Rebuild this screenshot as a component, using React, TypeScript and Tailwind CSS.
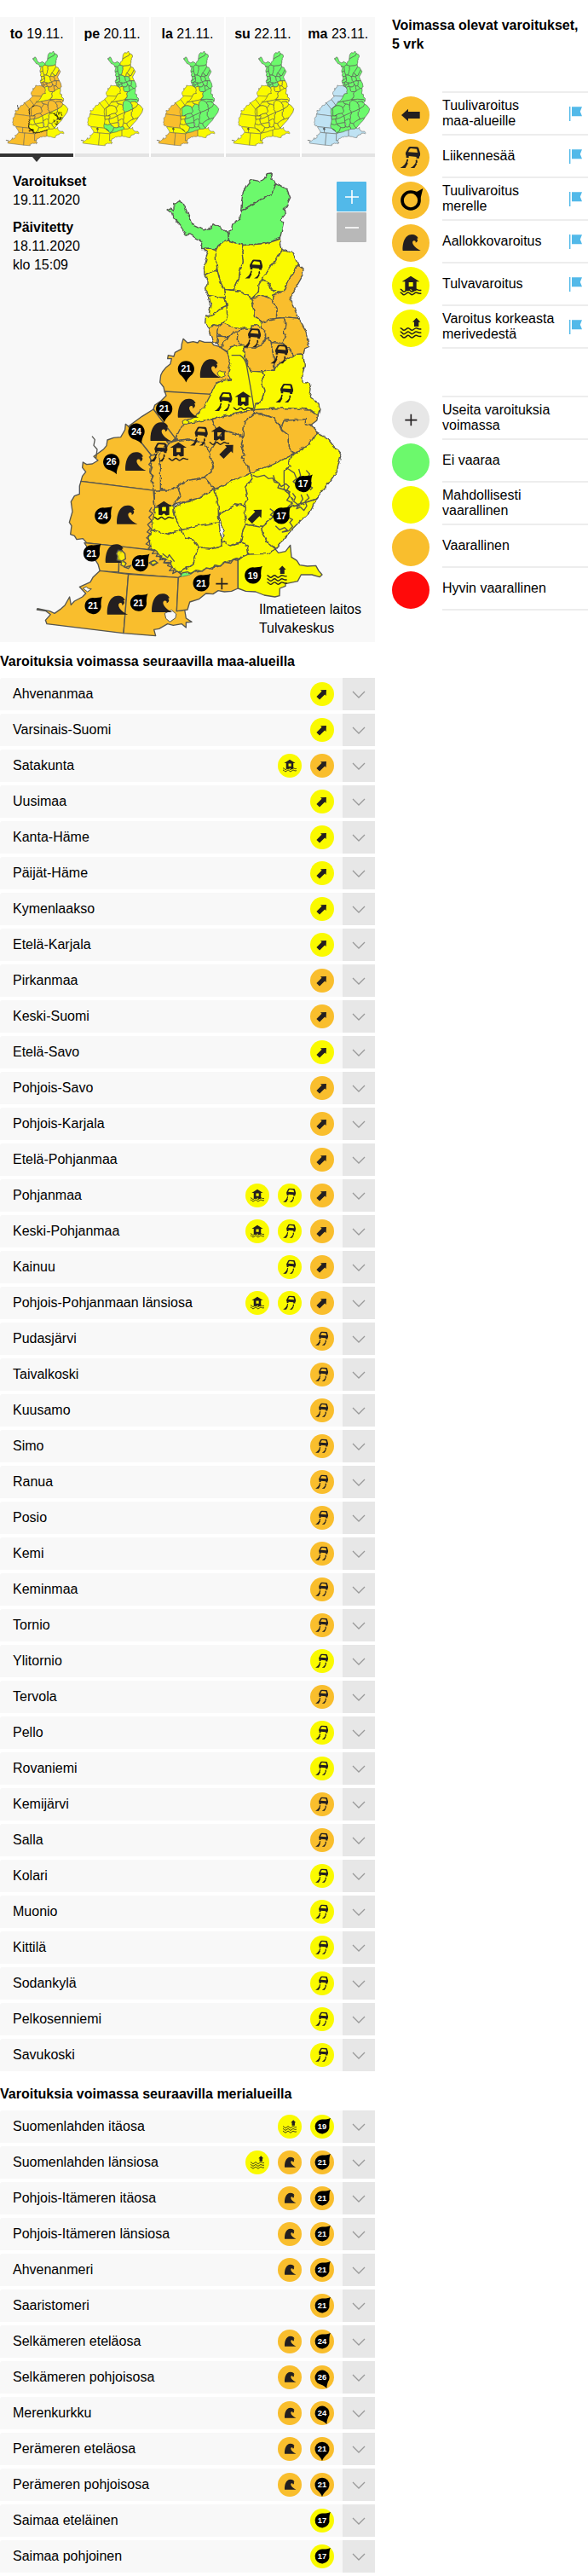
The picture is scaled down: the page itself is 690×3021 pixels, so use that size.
import type { ReactNode } from "react";

const FILL: Record<string, string> = { G: "#6cf96c", Y: "#fafa00", O: "#f9be2d", B: "#bfe2f3" };
const INK = "#231f20";

type Region = { id: string; points: string; days: string };

/* Sea and land areas; `days` holds one colour letter for each of the five days. */
const SEAS: Region[] = [
  { id: "peramerenPohjois", days: "OYYYB", points: "580,1380 576,1362 563,1345 566,1320 572,1308 585,1292 600,1280 604,1262 590,1262 592,1250 612,1254 616,1240 638,1228 640,1210 645,1192 660,1206 680,1202 696,1206 702,1198 720,1204 745,1204 752,1214 775,1220 800,1240 830,1270 830,1340 790,1342 765,1345 742,1388" },
  { id: "peramerenEtela", days: "OYYYB", points: "580,1377 742,1387 800,1400 720,1500 620,1560 618,1545 540,1440 545,1425 565,1412 585,1392" },
  { id: "merenkurkku", days: "OYYYB", points: "540,1440 618,1543 640,1600 545,1640 535,1605 452,1500 500,1465" },
  { id: "selkamerenPohjois", days: "OYOYB", points: "452,1500 535,1605 580,1640 570,1729 285,1693 290,1675 302,1660 290,1645 292,1626 305,1634 325,1632 345,1620 330,1606 365,1580 375,1568 378,1548 400,1540 425,1538 440,1512 442,1492" },
  { id: "selkamerenEtela", days: "OYOYB", points: "285,1693 570,1729 570,1940 305,1910 292,1895 270,1898 262,1885 248,1880 252,1850 244,1838 255,1800 250,1765 262,1745 280,1738 280,1710" },
  { id: "ahvenanmeri", days: "OYYYB", points: "297,1910 420,1922 418,2013 352,2010 345,1985 322,1950" },
  { id: "saaristomeri", days: "OYYYB", points: "420,1922 560,1938 680,2000 690,2030 628,2033 418,2015" },
  { id: "itameriLansi", days: "OYOYB", points: "352,2008 452,2020 435,2228 165,2195 160,2182 178,2162 162,2150 130,2145 132,2141 175,2150 192,2158 212,2144 228,2130 245,2100 250,2128 262,2115 290,2100 302,2088 280,2065 318,2048 328,2030" },
  { id: "itameriIta", days: "OYOYB", points: "452,2020 628,2032 622,2150 650,2145 655,2175 675,2188 655,2190 655,2208 640,2195 610,2200 590,2195 560,2212 542,2215 548,2237 435,2228" },
  { id: "suomenlahtiLansi", days: "OYOYB", points: "628,2032 690,1990 838,1940 838,2070 815,2080 790,2082 768,2078 750,2090 725,2088 700,2108 668,2118 660,2145 622,2150" },
  { id: "suomenlahtiIta", days: "YYYYB", points: "838,1940 960,1920 980,1945 1005,1940 1022,1918 1026,1960 1045,1972 1055,1988 1082,1992 1112,1990 1122,2008 1134,2022 1125,2030 1098,2022 1060,2022 1048,2045 1005,2054 1005,2062 985,2070 984,2096 968,2100 930,2094 900,2082 865,2080 838,2070" },
];

const LAND: Region[] = [
  { id: "utsjoki", days: "GYGGG", points: "848,743 852,700 857,670 870,648 885,632 915,638 935,622 940,614 954,612 958,630 972,645 965,665 955,685 925,698" },
  { id: "inari", days: "GYGGG", points: "848,743 925,698 955,685 965,665 972,648 1010,665 1022,695 1008,725 1000,735 1003,755 985,778 998,782 990,820 985,840 935,856 858,862 815,852 805,845 803,817 815,805 818,790 828,780 845,772" },
  { id: "enontekio", days: "GGGGG", points: "588,738 598,732 612,742 612,720 630,708 645,715 665,760 675,790 700,802 715,810 740,802 750,785 770,798 795,810 803,820 805,846 780,855 768,865 760,880 740,873 710,875 710,855 690,838 670,825 655,825 635,795 610,765 605,750" },
  { id: "kittila", days: "YGGGG", points: "760,880 768,865 780,855 803,846 858,863 852,885 856,920 845,950 842,980 822,1020 788,1018 775,990 765,952 760,910" },
  { id: "muonio", days: "YGGGG", points: "718,875 740,873 760,880 760,910 765,952 745,955 720,970 718,940 725,920 732,895" },
  { id: "kolari", days: "YGGGG", points: "720,970 745,955 765,952 775,990 788,1018 792,1048 735,1040 722,1020 732,1005 732,985" },
  { id: "sodankyla", days: "YYGGG", points: "858,863 935,857 985,840 993,878 945,955 928,970 922,985 912,1000 910,1025 885,1048 850,1025 822,1020 842,980 845,950 856,920 852,885" },
  { id: "savukoski", days: "YYGGG", points: "993,878 1030,890 1048,928 1020,980 1000,1025 975,1027 955,1020 950,1000 922,985 928,970 945,955" },
  { id: "pelkosenniemi", days: "YYGGG", points: "922,985 950,1000 955,1020 985,1027 960,1038 958,1058 940,1042 885,1050 910,1025 912,1000" },
  { id: "salla", days: "OYGGG", points: "1048,930 1068,948 1065,970 1020,1050 1035,1085 1052,1120 1000,1115 972,1120 972,1085 958,1058 960,1038 1000,1025 1020,980" },
  { id: "kemijarvi", days: "OGGGG", points: "882,1048 925,1040 950,1050 958,1058 972,1085 970,1120 945,1125 930,1140 915,1130 895,1110 890,1070" },
  { id: "rovaniemi", days: "YGGGG", points: "788,1018 850,1025 882,1048 890,1070 895,1110 922,1138 922,1153 905,1143 885,1145 885,1157 850,1155 820,1150 785,1137 800,1115 798,1075 792,1048" },
  { id: "pello", days: "YGGGG", points: "735,1040 792,1048 798,1075 770,1088 750,1110 735,1113 742,1070" },
  { id: "ylitornio", days: "YGGGG", points: "735,1113 750,1110 770,1088 798,1075 800,1115 785,1137 730,1152 722,1135 725,1110" },
  { id: "tornio", days: "OGGGG", points: "732,1152 785,1137 770,1150 767,1180 765,1208 750,1205 740,1180" },
  { id: "tervola", days: "OGGGG", points: "785,1137 820,1150 850,1155 855,1160 838,1168 820,1168 805,1185 775,1182 767,1170 770,1150" },
  { id: "keminmaa", days: "OGGGG", points: "767,1182 805,1185 785,1212 778,1224 765,1208" },
  { id: "simo", days: "OGGGG", points: "820,1168 838,1168 835,1195 845,1205 845,1215 815,1220 800,1237 780,1225 785,1210 805,1185" },
  { id: "ranua", days: "OGGGG", points: "838,1168 860,1155 885,1157 885,1143 905,1143 922,1153 935,1165 933,1190 920,1215 895,1225 860,1222 845,1210 835,1195" },
  { id: "posio", days: "OGGYG", points: "922,1138 945,1125 970,1120 1000,1118 1005,1140 1000,1170 1005,1180 992,1208 955,1205 945,1188 935,1190 935,1165 922,1153" },
  { id: "kuusamo", days: "OGGYG", points: "1000,1115 1052,1120 1075,1160 1088,1222 1072,1230 1068,1248 1045,1250 1035,1252 1020,1230 992,1208 1005,1180 1000,1170 1005,1140" },
  { id: "taivalkoski", days: "OGGYG", points: "955,1205 992,1208 1020,1230 1035,1252 1000,1280 965,1302 965,1265 958,1230" },
  { id: "pudasjarvi", days: "OGGYG", points: "860,1222 895,1225 920,1215 933,1190 945,1188 955,1205 958,1230 965,1265 965,1302 935,1308 885,1306 870,1295 872,1275 862,1260" },
  { id: "pohjoisPohjanmaa", days: "YYYYG", points: "800,1237 815,1220 858,1213 860,1225 862,1260 872,1290 885,1306 925,1308 932,1320 920,1345 930,1370 928,1390 918,1415 900,1420 895,1442 780,1466 665,1492 650,1480 680,1470 705,1450 728,1415 742,1388 760,1350 785,1338 815,1335 802,1312 812,1280" },
  { id: "kainuu", days: "YGGYG", points: "925,1308 965,1302 975,1285 1035,1250 1068,1248 1072,1290 1065,1315 1065,1345 1090,1350 1095,1370 1090,1395 1122,1420 1125,1440 1120,1462 1090,1440 990,1436 895,1442 900,1420 918,1415 928,1390 930,1370 920,1345 932,1320" },
  { id: "kainuuEtela", days: "OGGYG", points: "895,1442 990,1436 1090,1440 1120,1462 1115,1480 1095,1495 1075,1490 1075,1475 1000,1480 990,1503 960,1470 930,1460 895,1455" },
  { id: "pohjoisSavo", days: "OGGYG", points: "895,1455 930,1460 960,1470 990,1503 995,1515 1015,1530 1015,1570 1035,1598 960,1635 880,1665 875,1640 850,1610 860,1600 850,1560 855,1540 860,1485 875,1470" },
  { id: "pohjoisKarjalaYla", days: "OYGYG", points: "990,1503 1000,1480 1075,1475 1075,1490 1095,1495 1115,1520 1105,1542 1090,1562 1035,1598 1015,1570 1015,1530 995,1515" },
  { id: "pohjoisKarjala", days: "YYGYG", points: "1115,1520 1155,1545 1200,1602 1185,1660 1150,1710 1115,1755 1010,1790 1030,1760 1000,1720 1000,1660 1020,1640 1015,1620 1035,1598 1090,1562" },
  { id: "etelaSavo", days: "YYGYG", points: "880,1665 960,1635 1035,1598 1015,1620 1020,1640 1000,1660 1000,1720 1030,1760 1010,1790 960,1820 920,1855 865,1845 860,1800 862,1775 872,1755 865,1715 890,1680" },
  { id: "etelaKarjala", days: "YYGYG", points: "1010,1790 1115,1755 1090,1800 1030,1860 970,1932 940,1905 925,1880 920,1855 960,1820" },
  { id: "kymenlaakso", days: "YYGYG", points: "865,1845 920,1855 925,1880 940,1905 970,1932 940,1948 875,1950 870,1920 847,1905 855,1865" },
  { id: "paijatHame", days: "YYGYG", points: "770,1810 830,1775 862,1782 862,1800 865,1845 855,1865 847,1908 810,1920 780,1905 790,1865 778,1840" },
  { id: "keskiSuomi", days: "YYGYG", points: "755,1720 880,1665 890,1680 865,1715 872,1755 862,1782 830,1775 770,1810 768,1780" },
  { id: "pirkanmaa", days: "YYGYG", points: "612,1783 690,1755 755,1720 768,1780 770,1840 690,1850 640,1865 620,1830" },
  { id: "kantaHame", days: "YYGYG", points: "640,1865 690,1850 770,1838 780,1905 780,1920 740,1930 698,1925 680,1900 650,1890" },
  { id: "satakunta", days: "YYYYG", points: "545,1783 612,1776 612,1800 620,1830 640,1865 590,1880 532,1862 540,1820" },
  { id: "varsinaisSuomi", days: "YGYYG", points: "532,1862 590,1880 640,1865 650,1890 680,1900 698,1925 680,1985 632,2014 612,2000 600,1975 570,1965 555,1945 528,1925 525,1890" },
  { id: "uusimaa", days: "YGGYG", points: "698,1925 740,1930 780,1920 780,1905 810,1920 847,1908 870,1920 875,1950 840,1965 790,1980 740,2000 640,2020 632,2014 680,1985" },
  { id: "keskiSuomiYla", days: "OYGYG", points: "755,1560 790,1515 830,1525 855,1540 850,1560 860,1600 850,1610 875,1640 880,1665 755,1720 720,1680 745,1660 752,1640 735,1590" },
  { id: "keskiPohjanmaa", days: "OYYYG", points: "660,1490 745,1475 760,1510 790,1515 755,1560 735,1590 720,1560 660,1545 625,1550 618,1545 640,1500" },
  { id: "pohjanmaanKaista", days: "OYYYG", points: "745,1475 895,1442 895,1455 875,1470 860,1485 855,1540 830,1525 790,1515 760,1510" },
  { id: "etelaPohjanmaa", days: "OYGYG", points: "565,1640 560,1600 600,1555 625,1550 660,1545 720,1560 735,1590 752,1640 745,1660 720,1680 660,1690 600,1725 565,1720" },
  { id: "pohjanmaa", days: "OYYYG", points: "618,1545 580,1570 535,1605 530,1660 540,1725 545,1783 565,1720 565,1640 560,1600 600,1555" },
  { id: "satakuntaYla", days: "OYYYG", points: "543,1725 600,1725 625,1710 635,1740 612,1776 545,1783" },
  { id: "pirkanmaaYla", days: "OYGYG", points: "600,1725 660,1690 720,1680 755,1720 690,1755 612,1776 635,1740 625,1712" },
];

const LAKES =
  "M890 1672L905 1678 930 1672 945 1684 960 1682 966 1696 982 1700 990 1712 1006 1702 1018 1712 1010 1724 1022 1732 M962 1672L968 1690 984 1702 978 1716 998 1722 1016 1728 1020 1742 M1015 1650L1036 1664 1044 1684 1032 1694 1046 1706 M1052 1650L1058 1672 1052 1686 1062 1692 M1078 1655L1090 1668 1080 1686 M1030 1735L1040 1749 1034 1764 1050 1776 1044 1790 1058 1784 1070 1796 1080 1780 1074 1764 1088 1752 1080 1738 M1060 1740L1066 1756 1058 1768 1072 1776 M950 1790L964 1800 952 1812 970 1820 966 1834 M970 1850L984 1864 1002 1856 1012 1866 994 1872 1016 1868 1030 1852 1020 1838 1030 1828 1014 1820 1000 1832 M1020 1745L1010 1760 1030 1770 1022 1784 M1085 1690L1096 1698 1088 1708 1100 1716 1092 1724";
const SKERRIES =
  "M534 1785L526 1798 538 1806 524 1820 534 1832 520 1846 530 1858 518 1872 532 1880 516 1892 528 1902 514 1914 530 1922 522 1930 542 1938 536 1948 556 1946 550 1958 570 1956 562 1970 584 1966 576 1980 598 1978 590 1990 606 1996 596 2008 612 2006 608 2018 624 2010 640 2022 M640 2016L660 2012 672 2018 690 2006 712 2010 726 1998 748 2002 756 1988 776 1992 790 1978 812 1982 822 1968 838 1972 850 1958 M560 1960L584 1966 578 1980 600 1984 M536 1600L526 1608 534 1622 524 1634 536 1644 528 1664 540 1674 532 1692 542 1700 M618 1546L606 1554 586 1552 594 1562 M572 1948L590 1962 596 1952 614 1976 M324 1535L334 1547 330 1567 342 1581 338 1611 M525 1980L541 1972 555 1980 539 1990z";

function Shapes({ items, day, width }: { items: Region[]; day: number; width: number }) {
  return (
    <g stroke="#555550" strokeWidth={width} strokeLinejoin="round">
      {items.map((r) => (
        <polygon key={r.id} points={r.points} fill={FILL[r.days[day]]} />
      ))}
    </g>
  );
}

/* Glyphs are drawn around the origin, inside a disc of radius 66. */
function Arrow() {
  return <path fill={INK} d="M-33 0-9-22v10H32v24H-9v10z" />;
}

function Car() {
  return (
    <g fill={INK}>
      <path fillRule="evenodd" d="M-18-18-8-36Q-6-39-2-39L22-38Q27-37 28-34L32-20Q34-16 33-8L30-3V2H20V-3L-7-6V0H-16V-7Q-19-10-18-18zM-9-20 24-18 21-31 0-33Q-4-32-9-20z" />
      <path d="M-14 6Q-8 2-9 10L-12 16-10 20-19 36H-37Q-16 24-14 6zM17 9Q24 4 23 12L24 16 19 20 22 22 13 36H-1Q22 22 17 9z" />
    </g>
  );
}

function Wave() {
  return <path fill={INK} d="M-28 27C-30 4-22-30 4-30 16-30 22-25 26-17L21-15C27-12 24-3 17-1 19-6 15-10 10-8-1-3 13 18 35 27z" />;
}

function Ripple({ y, x = -37 }: { y: number; x?: number }) {
  return <path transform={`translate(${x} ${y})`} fill="none" stroke={INK} strokeWidth="4.5" d="M0 0c7 0 7 8 13 8S23 0 28 0s8 8 13 8S51 0 56 0s8 6 18 3" />;
}

function House({ single = false }: { single?: boolean }) {
  return (
    <g>
      <path fill={INK} fillRule="evenodd" d="M0-34 31-14H20V17L8 20 0 12-8 19-20 17V-14H-31zM-7-12V3H8V-12z" />
      <Ripple y={single ? 26 : 13} />
      {!single && <Ripple y={24} />}
    </g>
  );
}

function HighWater() {
  return (
    <g>
      <path fill={INK} d="M20-37 34-22H28V-6H12V-22H6z" />
      <Ripple y={-1} />
      <Ripple y={12} />
      <Ripple y={25} />
    </g>
  );
}

function Drop({ value, turn }: { value: number; turn: number }) {
  return (
    <g>
      <path transform={`rotate(${turn})`} d="M0-66C-5-52-13-44-22-34A40 40 0 1 0 22-34C13-44 5-52 0-66z" />
      <text textAnchor="middle" y="15" fill="#fff" fontSize="44" fontWeight="700" className="font-['Liberation_Sans',sans-serif]">
        {value}
      </text>
    </g>
  );
}

function DropRing() {
  return (
    <g>
      <circle r="30" fill="none" stroke="#000" strokeWidth="11" />
      <path d="M43-42 33-1 18-23-1-33 22-31z" />
    </g>
  );
}

function Plus() {
  return <path stroke={INK} strokeWidth="5" d="M-20 2H22M1-19V22" />;
}

function Badge({ color, size, children }: { color: string; size: string; children?: ReactNode }) {
  return (
    <svg viewBox="-66 -66 132 132" className={`block shrink-0 ${size}`} aria-hidden="true">
      <circle r="66" fill={color} />
      {children}
    </svg>
  );
}

function glyphFor(code: string): ReactNode {
  switch (code[0]) {
    case "a":
      return <g transform="rotate(135)"><Arrow /></g>;
    case "c":
      return <Car />;
    case "h":
      return <House />;
    case "w":
      return <Wave />;
    case "m":
      return <HighWater />;
    default:
      return <Drop value={Number(code.slice(2))} turn={{ n: 45, s: 180, e: 157 }[code[0]] ?? 45} />;
  }
}

const DROPS = [
  [655, 1298, 21, 180], [578, 1438, 21, 180], [480, 1518, 24, 157], [392, 1625, 26, 157],
  [362, 1815, 24, 45], [322, 1947, 21, 45], [493, 1982, 21, 45], [327, 2132, 21, 45], [487, 2122, 21, 45],
  [708, 2052, 21, 45], [890, 2025, 19, 45], [990, 1815, 17, 45], [1067, 1703, 17, 45],
];
const WAVES = [[737, 1298], [659, 1438], [562, 1520], [474, 1625], [444, 1813], [404, 1949], [410, 2131], [567, 2123]];
const CARS = [[895, 948], [889, 1190], [985, 1247], [1003, 1384], [788, 1414], [702, 1536], [560, 1592]];
const HOUSES = [[856, 1410], [628, 1588], [772, 1532], [577, 1795]];
const ARROWS = [[800, 1586], [900, 1814]];

function WarningMap() {
  return (
    <svg viewBox="0 552 1320 1707" className="block h-auto w-full" role="img" aria-label="Varoituskartta">
      <defs>
        <filter id="coast" x="-5%" y="-5%" width="110%" height="110%" colorInterpolationFilters="sRGB">
          <feTurbulence type="fractalNoise" baseFrequency="0.05" numOctaves="2" seed="4" result="n" />
          <feDisplacementMap in="SourceGraphic" in2="n" scale="14" xChannelSelector="R" yChannelSelector="G" />
        </filter>
      </defs>
      <Shapes items={SEAS} day={0} width={4} />
      <path d="M580 2158l24-12 16 14-2 14-20 14-14-12z M292 2070l12-6 6 6 12 2-14 10z" fill="#f8f8f8" stroke="#555550" strokeWidth="3" />
      <g filter="url(#coast)">
        <Shapes items={LAND} day={0} width={4} />
        <path d="M640 2018l42-6-20 12-26 6z" fill="#6cf96c" stroke="#555550" strokeWidth="2" />
      </g>
      <path d="M815 1250h30q20 12 24 40l16 90 10 62" fill="none" stroke="#555550" strokeWidth="4" />
      <path d={LAKES + SKERRIES} fill="none" stroke="#555550" strokeWidth="4" strokeLinejoin="round" />
      <g fill="#fafa00" stroke="#555550" strokeWidth="3">
        <path d="M765 1312l8-8 10 4 12 0-6 6 4 8-14 6-10-6z M642 1482l10-6 14 8-6 8-16 0z" />
      </g>
      {WAVES.map(([x, y]) => (
        <g key={`${x}-${y}`} transform={`translate(${x} ${y}) scale(1.15)`}><Wave /></g>
      ))}
      <path d="M410 1948l6-12 14 2 10 10 2 18-10 6 12 10-6 12-12-6 2-14-16-4 2-14z M440 1996l20-6-8 10z M530 1978l14-6 10 8-18 8z" fill="#fafa00" fillOpacity=".75" stroke="#555550" strokeWidth="4" />
      {CARS.map(([x, y]) => (
        <g key={`${x}-${y}`} transform={`translate(${x} ${y}) scale(.88)`}><Car /></g>
      ))}
      {HOUSES.map(([x, y]) => (
        <g key={`${x}-${y}`} transform={`translate(${x} ${y}) scale(.94)`}><House single /></g>
      ))}
      {ARROWS.map(([x, y]) => (
        <g key={`${x}-${y}`} transform={`translate(${x} ${y}) rotate(135) scale(.9)`}><Arrow /></g>
      ))}
      <g transform="translate(975 2025) scale(.94)"><HighWater /></g>
      <g transform="translate(780 2052)"><Plus /></g>
      {DROPS.map(([x, y, v, t]) => (
        <g key={`${x}-${y}`} transform={`translate(${x} ${y}) scale(.72)`}><Drop value={v} turn={t} /></g>
      ))}
    </svg>
  );
}

function DayMap({ day }: { day: number }) {
  return (
    <svg viewBox="27 583 1271 1695" className="mt-[7px] block h-[116px] w-full" aria-hidden="true">
      <Shapes items={SEAS} day={day} width={7} />
      <Shapes items={LAND} day={day} width={9} />
      {day === 0 ? (
        <path d={LAKES + SKERRIES} fill="none" stroke="#000" strokeWidth="10" />
      ) : (
        <path d="M400 1940l20-6 10 20-20 10z M560 1945l20 12 30 30" fill="none" stroke="#222" strokeWidth="10" />
      )}
    </svg>
  );
}

const DAYS = [["to", "19.11."], ["pe", "20.11."], ["la", "21.11."], ["su", "22.11."], ["ma", "23.11."]];

/* Each warning: glyph (a, c, h, w, m, or drop direction n, s, e), colour letter, then the wind speed. */
const LAND_ROWS: [string, string][] = [
  ["Ahvenanmaa", "aY"], ["Varsinais-Suomi", "aY"], ["Satakunta", "hY aO"], ["Uusimaa", "aY"], ["Kanta-Häme", "aY"],
  ["Päijät-Häme", "aY"], ["Kymenlaakso", "aY"], ["Etelä-Karjala", "aY"], ["Pirkanmaa", "aO"], ["Keski-Suomi", "aO"],
  ["Etelä-Savo", "aY"], ["Pohjois-Savo", "aO"], ["Pohjois-Karjala", "aO"], ["Etelä-Pohjanmaa", "aO"],
  ["Pohjanmaa", "hY cY aO"], ["Keski-Pohjanmaa", "hY cY aO"], ["Kainuu", "cY aO"], ["Pohjois-Pohjanmaan länsiosa", "hY cY aO"],
  ["Pudasjärvi", "cO"], ["Taivalkoski", "cO"], ["Kuusamo", "cO"], ["Simo", "cO"], ["Ranua", "cO"], ["Posio", "cO"],
  ["Kemi", "cO"], ["Keminmaa", "cO"], ["Tornio", "cO"], ["Ylitornio", "cY"], ["Tervola", "cO"], ["Pello", "cY"],
  ["Rovaniemi", "cY"], ["Kemijärvi", "cO"], ["Salla", "cO"], ["Kolari", "cY"], ["Muonio", "cY"], ["Kittilä", "cY"],
  ["Sodankylä", "cY"], ["Pelkosenniemi", "cY"], ["Savukoski", "cY"],
];
const SEA_ROWS: [string, string][] = [
  ["Suomenlahden itäosa", "mY nY19"], ["Suomenlahden länsiosa", "mY wO nO21"], ["Pohjois-Itämeren itäosa", "wO nO21"],
  ["Pohjois-Itämeren länsiosa", "wO nO21"], ["Ahvenanmeri", "wO nO21"], ["Saaristomeri", "nO21"],
  ["Selkämeren eteläosa", "wO nO24"], ["Selkämeren pohjoisosa", "wO eO26"], ["Merenkurkku", "wO eO24"],
  ["Perämeren eteläosa", "wO sO21"], ["Perämeren pohjoisosa", "wO sO21"], ["Saimaa eteläinen", "nY17"], ["Saimaa pohjoinen", "nY17"],
];

function RegionList({ title, rows }: { title: string; rows: [string, string][] }) {
  return (
    <section>
      <h2 className="mb-2 text-[16px] leading-[22px] font-bold">{title}</h2>
      <ul className="flex flex-col gap-1">
        {rows.map(([name, codes]) => (
          <li key={name} className="flex h-[38px] items-center rounded-tl-[3px] bg-[#f8f8f8]">
            <span className="flex-1 pl-[15px]">{name}</span>
            <span className="mr-[10px] flex gap-[10px]">
              {codes.split(" ").map((code) => (
                <Badge key={code} color={FILL[code[1]]} size="size-7">{glyphFor(code)}</Badge>
              ))}
            </span>
            <button type="button" aria-label={name} className="flex size-[38px] items-center justify-center bg-[#e7e7e7]">
              <svg viewBox="0 0 16 9" className="h-[9px] w-4" fill="none" stroke="#999" strokeWidth="1.3" aria-hidden="true">
                <path d="M1 1l7 7 7-7" />
              </svg>
            </button>
          </li>
        ))}
      </ul>
    </section>
  );
}

function Flag() {
  return (
    <svg viewBox="0 0 16 17" className="mr-[6px] h-[17px] w-4 shrink-0" fill="#52b9e9" aria-hidden="true">
      <path d="M0 0h1.4v17H0zM3 .3h12l-2.2 5.4L15 11.3H3z" />
    </svg>
  );
}

function Legend({ items, flags = false }: { items: { label: string; color: string; glyph?: ReactNode }[]; flags?: boolean }) {
  return (
    <ul>
      {items.map((item) => (
        <li key={item.label} className="group flex h-[50px] gap-[15px] last:h-[52px]">
          <span className="pt-[6px]"><Badge color={item.color} size="size-11">{item.glyph}</Badge></span>
          <span className="flex flex-1 items-center justify-between border-t-2 border-[#ededed] leading-[18px] group-last:border-b-2">
            <span className="whitespace-pre-line">{item.label}</span>
            {flags && <Flag />}
          </span>
        </li>
      ))}
    </ul>
  );
}

export default function App() {
  return (
    <div className="flex items-start gap-5 bg-white pb-1 font-['Liberation_Sans',Arial,sans-serif] text-[16px] leading-[22px] text-black">
      <main className="min-w-0 flex-1 pt-5">
        <div className="grid grid-cols-5 gap-[2px]">
          {DAYS.map(([name, date], i) => (
            <button
              key={name}
              type="button"
              className={`relative block h-[164px] border-b-4 bg-[#f8f8f8] pt-[3px] ${i === 0 ? "border-[#333]" : "border-[#e3e3e3]"}`}
            >
              <span><b>{name}</b> {date}</span>
              <DayMap day={i} />
              {i === 0 && (
                <span className="absolute top-full left-1/2 z-10 mt-1 -ml-[5px] border-x-[5px] border-t-[6px] border-x-transparent border-t-[#333]" />
              )}
            </button>
          ))}
        </div>

        <div className="relative bg-[#f8f8f8]">
          <WarningMap />
          <div className="absolute top-[18px] left-[15px]">
            <p><b>Varoitukset</b><br />19.11.2020</p>
            <p className="mt-[10px]"><b>Päivitetty</b><br />18.11.2020<br />klo 15:09</p>
          </div>
          <div className="absolute top-[29px] right-[10px] flex flex-col gap-px">
            <button type="button" aria-label="Lähennä" className="flex size-[35px] items-center justify-center rounded-[1px] bg-[#52b9e9]">
              <svg viewBox="0 0 16 16" className="size-4" stroke="#fff" strokeWidth="1.6" aria-hidden="true"><path d="M0 8h16M8 0v16" /></svg>
            </button>
            <button type="button" aria-label="Loitonna" className="flex size-[35px] items-center justify-center rounded-[1px] bg-[#b8b8b8]">
              <svg viewBox="0 0 16 16" className="size-4" stroke="#fff" strokeWidth="1.6" aria-hidden="true"><path d="M0 8h16" /></svg>
            </button>
          </div>
          <p className="absolute right-4 bottom-[5px]">Ilmatieteen laitos<br />Tulvakeskus</p>
        </div>

        <div className="mt-3 flex flex-col gap-4">
          <RegionList title="Varoituksia voimassa seuraavilla maa-alueilla" rows={LAND_ROWS} />
          <RegionList title="Varoituksia voimassa seuraavilla merialueilla" rows={SEA_ROWS} />
        </div>
      </main>

      <aside className="w-[230px] shrink-0 pt-[19px]">
        <h2 className="mb-11 font-bold">Voimassa olevat varoitukset, 5 vrk</h2>
        <Legend
          flags
          items={[
            { label: "Tuulivaroitus\nmaa-alueille", color: FILL.O, glyph: <Arrow /> },
            { label: "Liikennesää", color: FILL.O, glyph: <Car /> },
            { label: "Tuulivaroitus\nmerelle", color: FILL.O, glyph: <DropRing /> },
            { label: "Aallokkovaroitus", color: FILL.O, glyph: <Wave /> },
            { label: "Tulvavaroitus", color: FILL.Y, glyph: <House /> },
            { label: "Varoitus korkeasta\nmerivedestä", color: FILL.Y, glyph: <HighWater /> },
          ]}
        />
        <div className="mt-[55px]">
          <Legend
            items={[
              { label: "Useita varoituksia\nvoimassa", color: "#e7e7e7", glyph: <Plus /> },
              { label: "Ei vaaraa", color: FILL.G },
              { label: "Mahdollisesti\nvaarallinen", color: FILL.Y },
              { label: "Vaarallinen", color: FILL.O },
              { label: "Hyvin vaarallinen", color: "#ff0a0a" },
            ]}
          />
        </div>
      </aside>
    </div>
  );
}
